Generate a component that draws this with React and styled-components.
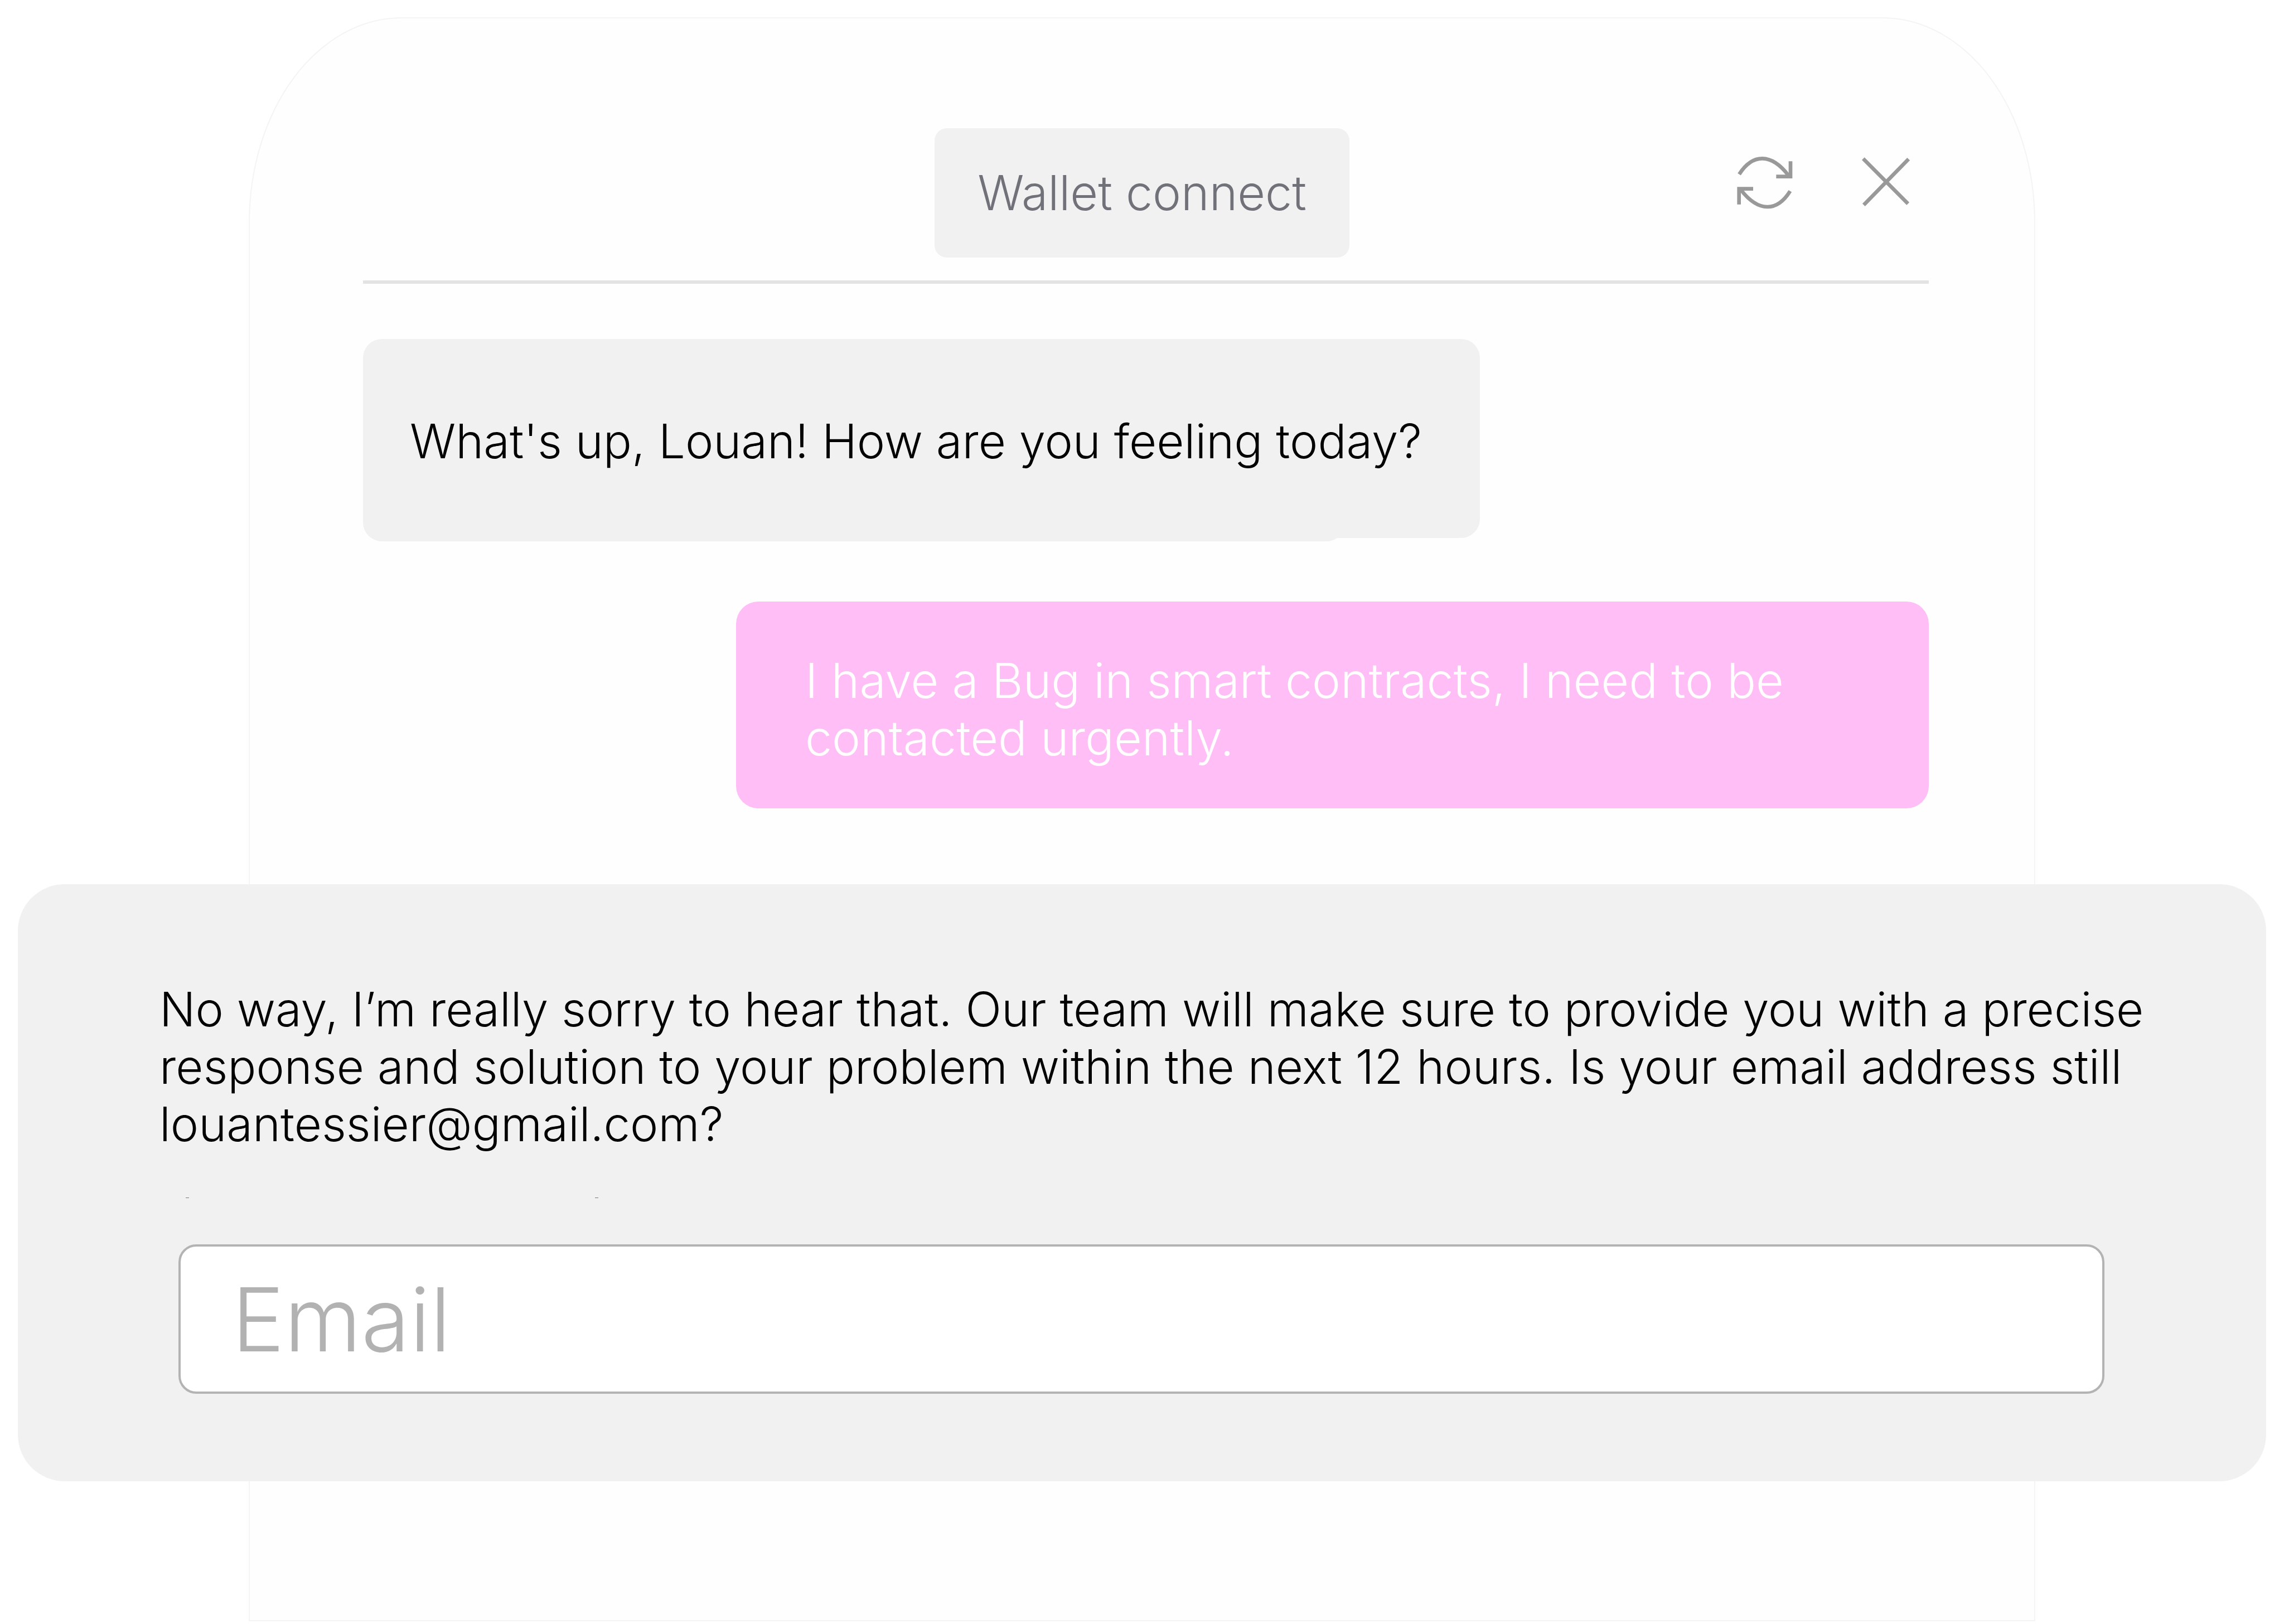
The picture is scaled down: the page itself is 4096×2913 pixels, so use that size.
import React from "react";
import styled, { createGlobalStyle } from "styled-components";

const GlobalStyle = createGlobalStyle`
  *, *::before, *::after { box-sizing: border-box; }
  body {
    margin: 0;
    background: #fff;
    font-family: Inter, "Liberation Sans", sans-serif;
    font-weight: 300;
  }
  p { margin: 0; }
  button, input { font: inherit; }
`;

const Page = styled.main`
  padding: 31px 446px 4px;
`;

const Phone = styled.section`
  display: flex;
  flex-direction: column;
  padding: 197px 189px 249px 203px;
  background: #fefefe;
  border: 2px solid #f4f4f4;
  border-radius: 274px 274px 0 0 / 368px 368px 0 0;
`;

const Header = styled.header`
  display: grid;
  grid-template-columns: 1fr auto 1fr;
  padding: 0 14px 41px 0;
  border-bottom: 6px solid #e3e3e3;
`;

const WalletButton = styled.button`
  grid-column: 2;
  padding: 65px 77px 64px;
  border: 0;
  border-radius: 22px;
  background: #f1f1f1;
  color: #71717a;
  font-size: 86px;
  line-height: 103px;
`;

const Actions = styled.div`
  display: flex;
  justify-content: flex-end;
  align-items: flex-start;
  gap: 124px;
  padding: 50px 20px 0 0;
`;

const IconButton = styled.button`
  display: flex;
  padding: 0;
  border: 0;
  background: none;
  color: #999;

  svg { display: block; fill: none; stroke: currentColor; }
`;

const Thread = styled.div`
  display: flex;
  flex-direction: column;
  padding-top: 99px;
`;

const Bubble = styled.p`
  font-size: ${({ $size = 85 }) => $size}px;
  line-height: 103px;
`;

const Greeting = styled(Bubble)`
  position: relative;
  align-self: flex-start;
  padding: 132px 104px 122px 84px;
  border-radius: 34px;
  background: #f1f1f1;
  color: #000;

  &::after {
    content: "";
    position: absolute;
    z-index: 0;
    top: 60px;
    bottom: -6px;
    left: 0;
    width: 88%;
    border-radius: 0 0 34px 34px;
    background: #f1f1f1;
  }

  span { position: relative; z-index: 1; }
`;

const Outgoing = styled(Bubble)`
  align-self: flex-end;
  width: 2139px;
  max-width: 100%;
  margin-top: 114px;
  padding: 91px 240px 74px 124px;
  border-radius: 40px;
  background: #ffbef6;
  color: #fff;
`;

const Reply = styled.form`
  margin: 136px -605px 0 -619px;
  padding: 173px 180px 157px 254px;
  border-radius: 84px;
  background: #f1f1f1;
`;

const ReplyText = styled(Bubble)`
  color: #000;
`;

const Specks = styled.div`
  display: flex;
  gap: 728px;
  padding: 80px 0 83px 47px;
`;

const Speck = styled.i`
  width: 6px;
  height: 1px;
  background: #777;
`;

const Field = styled.label`
  display: block;
  margin: 0 110px 0 34px;
`;

const EmailInput = styled.input`
  display: block;
  width: 100%;
  height: 268px;
  padding: 0 92px;
  border: 4px solid #b3b3b3;
  border-radius: 32px;
  outline: 0;
  background: #fff;
  color: #000;
  font-size: 158px;

  &::placeholder { color: #b2b2b2; opacity: 1; }
`;

const RefreshIcon = () => (
  <svg width="100" height="96" viewBox="0 0 300 288" strokeWidth="20" aria-hidden="true">
    <path d="M12 98C85-16 185-16 277 104" />
    <path d="M288 28V110H211" />
    <path d="M286 188C215 302 115 302 22 183" />
    <path d="M11 260V176H87" />
  </svg>
);

const CloseIcon = () => (
  <svg width="86" height="92" viewBox="0 -6 258 276" strokeWidth="20" aria-hidden="true">
    <path d="M7 8L248 250M251 10L10 257" />
  </svg>
);

export default function App() {
  return (
    <>
      <GlobalStyle />
      <Page>
        <Phone>
          <Header>
            <WalletButton type="button">Wallet connect</WalletButton>
            <Actions>
              <IconButton type="button" aria-label="Refresh"><RefreshIcon /></IconButton>
              <IconButton type="button" aria-label="Close"><CloseIcon /></IconButton>
            </Actions>
          </Header>
          <Thread>
            <Greeting><span>What's up, Louan! How are you feeling today?</span></Greeting>
            <Outgoing $size={86}>I have a Bug in smart contracts, I need to be contacted urgently.</Outgoing>
            <Reply>
              <ReplyText>
                No way, I’m really sorry to hear that. Our team will make sure to provide you with a precise
                response and solution to your problem within the next 12 hours. Is your email address still
                louantessier@gmail.com?
              </ReplyText>
              <Specks aria-hidden="true"><Speck /><Speck /></Specks>
              <Field>
                <EmailInput type="email" placeholder="Email" aria-label="Email" />
              </Field>
            </Reply>
          </Thread>
        </Phone>
      </Page>
    </>
  );
}
